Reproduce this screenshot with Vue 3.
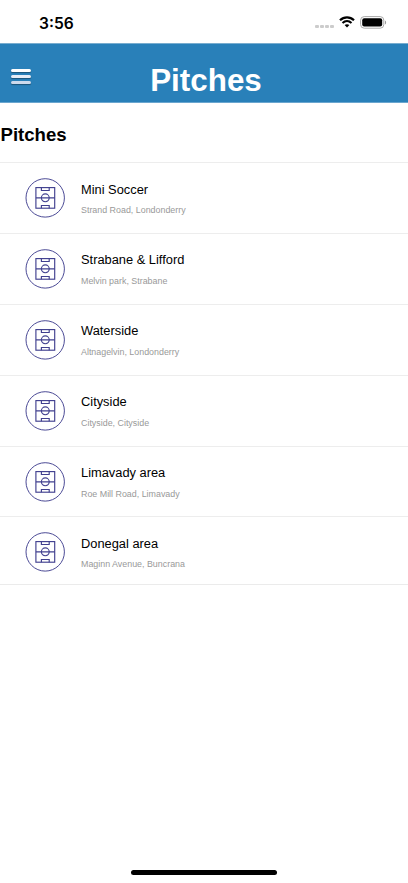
<script setup>
const pitches = [
  { name: 'Mini Soccer', place: 'Strand Road, Londonderry' },
  { name: 'Strabane & Lifford', place: 'Melvin park, Strabane' },
  { name: 'Waterside', place: 'Altnagelvin, Londonderry' },
  { name: 'Cityside', place: 'Cityside, Cityside' },
  { name: 'Limavady area', place: 'Roe Mill Road, Limavady' },
  { name: 'Donegal area', place: 'Maginn Avenue, Buncrana' },
]
</script>

<template>
  <div class="screen">
    <div class="status">
      <span class="time">3:56</span>
      <div class="indicators">
        <div class="signal"><i></i><i></i><i></i><i></i></div>
        <svg class="wifi" width="16" height="12" viewBox="0 0 16 12">
          <path d="M1 4.3C5 .4 11 .4 15 4.3" fill="none" stroke="#000" stroke-width="2.2" />
          <path d="M3.5 7C6.2 4.5 9.8 4.5 12.5 7" fill="none" stroke="#000" stroke-width="2.1" />
          <path d="M5.6 9.1C7 7.8 9 7.8 10.4 9.1L8 11.6Z" fill="#000" />
        </svg>
        <svg class="battery" width="27" height="13" viewBox="0 0 27 13">
          <rect x=".6" y=".6" width="23.2" height="11.6" rx="3.6" fill="none" stroke="#a8a8a8" />
          <rect x="2.2" y="2.2" width="20" height="8.4" rx="2" fill="#000" />
          <path d="M25 4.4c1.5.6 1.5 3.4 0 4Z" fill="#999" />
        </svg>
      </div>
    </div>
    <header class="bar">
      <div class="menu"><i></i><i></i><i></i></div>
      <h1>Pitches</h1>
    </header>
    <h2>Pitches</h2>
    <ul class="list">
      <li v-for="p in pitches" :key="p.name">
        <svg class="icon" width="40" height="40" viewBox="0 0 40 40" fill="none" stroke="#41408f">
          <circle cx="20.2" cy="19.9" r="19.2" stroke-width=".95" />
          <g stroke-width="1.15">
            <rect x="10.9" y="9.6" width="18.8" height="20.6" />
            <path d="M10.9 19.8h5.5M24.2 19.8h5.5M16.4 19.8h7.8M16.4 9.6v2.9h7.8v-2.9M16.4 30.2v-2.7h7.8v2.7" />
            <circle cx="20.3" cy="19.8" r="3.9" />
          </g>
        </svg>
        <div class="text">
          <span class="name">{{ p.name }}</span>
          <span class="place">{{ p.place }}</span>
        </div>
      </li>
    </ul>
    <div class="home"></div>
  </div>
</template>

<style>
body { margin: 0; background: #fff; }
</style>

<style scoped>
.screen {
  display: flex;
  flex-direction: column;
  width: 408px;
  height: 883px;
  overflow: hidden;
  box-sizing: border-box;
  padding-bottom: 8px;
  background: #fff;
  color: #000;
  font-family: "Liberation Sans", Arial, sans-serif;
}
.status {
  display: flex;
  justify-content: space-between;
  height: 43px;
  padding: 0 21px 0 39px;
  flex: none;
}
.time {
  font: 600 15.6px/20px Inter, sans-serif;
  padding-top: 14px;
}
.indicators { display: flex; align-items: flex-start; padding-top: 16px; }
.signal { display: flex; gap: 1.4px; margin: 8.5px 5.5px 0 0; }
.signal i { width: 3.6px; height: 3.6px; border-radius: 1px; background: #ccc; }
.wifi { margin-right: 5px; }
.bar {
  position: relative;
  display: flex;
  justify-content: center;
  height: 60px;
  flex: none;
  background: #2980b9;
  border-top: 1px solid #78adcf;
  border-bottom: 1px solid #6aa6cf;
  box-sizing: border-box;
}
.menu {
  position: absolute;
  left: 11px;
  top: 25px;
  display: flex;
  flex-direction: column;
  gap: 2.5px;
}
.menu i {
  width: 20px;
  height: 3.4px;
  border-radius: 2px;
  background: #fff;
  box-shadow: 0 1px 1px rgba(0, 0, 0, .35);
}
.menu i:nth-child(2) { background: #e6edf7; }
.menu i:nth-child(3) { background: #ccd9ec; }
h1 {
  margin: 0;
  padding-left: 4px;
  color: #fff;
  font-size: 31.4px;
  line-height: 36px;
  padding-top: 19px;
}
h2 {
  margin: 0;
  height: 59px;
  box-sizing: border-box;
  padding: 21px 0 0 0.5px;
  font-size: 18.6px;
  line-height: 22px;
  flex: none;
}
.list {
  list-style: none;
  margin: 0;
  padding: 0;
  border-bottom: 1px solid #ebebeb;
}
li {
  display: flex;
  align-items: flex-start;
  height: 70.9px;
  box-sizing: border-box;
  border-top: 1px solid #ededed;
  padding: 15px 0 0 25px;
}
li:last-child { height: 67.5px; }
.icon { flex: none; }
.text { display: flex; flex-direction: column; padding: 3.5px 0 0 16px; }
.name { font-size: 12.85px; line-height: 16px; white-space: nowrap; }
.place { margin-top: 7.5px; font-size: 8.9px; line-height: 11px; color: #999; white-space: nowrap; }
.home {
  width: 146px;
  height: 5px;
  border-radius: 3px;
  background: #000;
  margin: auto auto 0;
}
</style>
